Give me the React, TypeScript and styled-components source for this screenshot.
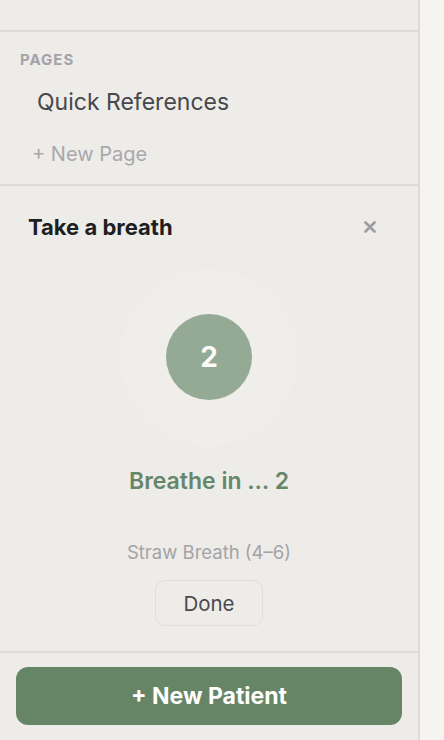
import React from "react";
import styled, { createGlobalStyle } from "styled-components";

const GlobalStyle = createGlobalStyle`
  html, body {
    margin: 0;
    padding: 0;
    background: #f5f4f0;
  }
  body {
    font-family: Inter, "Noto Sans", "Liberation Sans", sans-serif;
    -webkit-font-smoothing: antialiased;
  }
  * {
    box-sizing: border-box;
  }
`;

const Shell = styled.div`
  display: flex;
  height: 740px;
  width: 444px;
  overflow: hidden;
`;

const Sidebar = styled.aside`
  width: 420px;
  flex-shrink: 0;
  display: flex;
  flex-direction: column;
  background: #edece8;
  border-right: 2px solid #dddbd5;
`;

const Section = styled.section<{ $grow?: boolean }>`
  border-bottom: 2px solid #dddbd5;
  ${(p) => (p.$grow ? "flex: 1;" : "")}
`;

const Stub = styled(Section)`
  height: 32px;
`;

const PagesSection = styled(Section)`
  display: flex;
  flex-direction: column;
  padding: 18px 20px 17px;
`;

const SectionLabel = styled.div`
  font-size: 15px;
  line-height: 20px;
  font-weight: 700;
  letter-spacing: 1px;
  text-transform: uppercase;
  color: #a3a3a8;
`;

const PageLink = styled.div`
  margin-top: 18px;
  padding-left: 17px;
  font-size: 23px;
  line-height: 28px;
  color: #47474c;
`;

const NewPage = styled.div`
  margin-top: 25px;
  padding-left: 12px;
  font-size: 20px;
  line-height: 26px;
  color: #a8a8ad;
`;

const BreathSection = styled(Section)`
  display: flex;
  flex-direction: column;
  align-items: center;
  padding: 27px 28px 0;
`;

const BreathHeader = styled.div`
  align-self: stretch;
  display: flex;
  align-items: center;
  justify-content: space-between;
`;

const Title = styled.h2`
  margin: 0;
  font-size: 22px;
  line-height: 28px;
  font-weight: 700;
  color: #1e1e21;
`;

const CloseButton = styled.button`
  display: flex;
  align-items: center;
  justify-content: center;
  width: 20px;
  height: 20px;
  padding: 0;
  margin-right: 10px;
  border: none;
  background: none;
  color: #9c9ca1;
  cursor: pointer;
`;

const Halo = styled.div`
  margin-top: 26px;
  width: 180px;
  height: 180px;
  border-radius: 50%;
  display: flex;
  align-items: center;
  justify-content: center;
  background: radial-gradient(
    circle,
    rgba(255, 255, 255, 0.12) 0 48%,
    rgba(255, 255, 255, 0.06) 48% 66%,
    rgba(255, 255, 255, 0.1) 66% 68%,
    rgba(255, 255, 255, 0.04) 68% 84%,
    rgba(255, 255, 255, 0.08) 84% 86%,
    rgba(255, 255, 255, 0.02) 86% 100%
  );
`;

const Orb = styled.div`
  width: 86px;
  height: 86px;
  border-radius: 50%;
  background: #95aa94;
  display: flex;
  align-items: center;
  justify-content: center;
  color: #fbfbf9;
  font-size: 28px;
  font-weight: 700;
`;

const Phase = styled.div`
  margin-top: 19px;
  font-size: 23px;
  line-height: 30px;
  font-weight: 600;
  color: #66866a;
`;

const Technique = styled.div`
  margin-top: 44px;
  font-size: 18.5px;
  line-height: 24px;
  color: #a3a3a8;
`;

const DoneButton = styled.button`
  margin-top: 16px;
  width: 108px;
  height: 46px;
  border: 1.5px solid #e0ded8;
  border-radius: 10px;
  background: transparent;
  font-family: inherit;
  font-size: 20.5px;
  color: #4a4a4f;
  cursor: pointer;
`;

const Footer = styled.footer`
  padding: 14px 16px 15px;
`;

const PrimaryButton = styled.button`
  width: 386px;
  height: 58px;
  border: none;
  border-radius: 12px;
  background: #668567;
  color: #ffffff;
  font-family: inherit;
  font-size: 23px;
  font-weight: 700;
  cursor: pointer;
`;

const Canvas = styled.main`
  flex: 1;
  background: #f5f4f0;
`;

export default function App() {
  const count = 2;
  return (
    <>
      <GlobalStyle />
      <Shell>
        <Sidebar>
          <Stub />
          <PagesSection>
            <SectionLabel>Pages</SectionLabel>
            <PageLink>Quick References</PageLink>
            <NewPage>+ New Page</NewPage>
          </PagesSection>
          <BreathSection $grow>
            <BreathHeader>
              <Title>Take a breath</Title>
              <CloseButton aria-label="Close">
                <svg width="12" height="12" viewBox="0 0 12 12">
                  <path
                    d="M1.5 1.5 L10.5 10.5 M10.5 1.5 L1.5 10.5"
                    stroke="currentColor"
                    strokeWidth="2.6"
                    strokeLinecap="round"
                  />
                </svg>
              </CloseButton>
            </BreathHeader>
            <Halo>
              <Orb>{count}</Orb>
            </Halo>
            <Phase>Breathe in … {count}</Phase>
            <Technique>Straw Breath (4–6)</Technique>
            <DoneButton>Done</DoneButton>
          </BreathSection>
          <Footer>
            <PrimaryButton>+ New Patient</PrimaryButton>
          </Footer>
        </Sidebar>
        <Canvas />
      </Shell>
    </>
  );
}
